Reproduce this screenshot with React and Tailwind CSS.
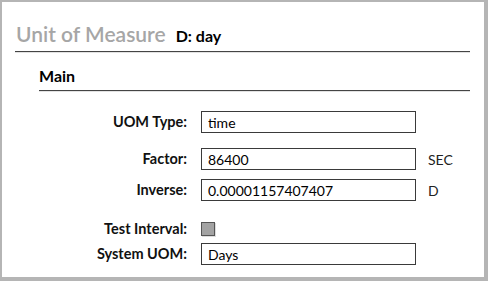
const font = { fontFamily: "Lato, 'Open Sans', sans-serif" };

function Field({ value }) {
  return (
    <div className="w-[215px] h-[22px] border border-[#3a3a3a] bg-white pl-[6px] flex items-center text-[14px] text-black">
      {value}
    </div>
  );
}

function Row({ label, children, unit, className = "" }) {
  return (
    <div className={"flex items-center " + className}>
      <div className="w-[162px] pr-[14px] text-right text-[14.5px] leading-[20px] font-bold text-[#111]">{label}</div>
      {children}
      {unit && <div className="ml-[12px] text-[14px] text-[#222]">{unit}</div>}
    </div>
  );
}

export default function App() {
  return (
    <div
      className="w-[488px] h-[281px] bg-white border-t-2 border-l-2 border-r-[4px] border-b-[4px] border-[#b5b5b5]"
      style={font}
    >
      <div className="pl-[14px] pt-[20px] flex items-baseline">
        <span className="text-[21px] leading-[24px] text-[#a6a6a6] font-semibold">Unit of Measure</span>
        <span className="ml-[10px] text-[16px] font-bold text-black">D: day</span>
      </div>
      <div className="ml-[13px] mr-[14px] mt-[3px] border-t border-[#444] border-b border-b-[#e2e2e2]" />

      <div className="ml-[37px] mr-[14px]">
        <div className="mt-[13px] text-[16px] leading-[20px] font-bold text-black">Main</div>
        <div className="mt-[4px] border-t border-[#444] border-b border-b-[#e2e2e2]" />

        <div className="flex flex-col">
          <Row label="UOM Type:" className="mt-[19px]">
            <Field value="time" />
          </Row>
          <Row label="Factor:" unit="SEC" className="mt-[15px]">
            <Field value="86400" />
          </Row>
          <Row label="Inverse:" unit="D" className="mt-[9px]">
            <Field value="0.00001157407407" />
          </Row>
          <Row label="Test Interval:" className="mt-[18px]">
            <div className="w-[14px] h-[14px] border border-[#555] bg-[#a3a3a3] shadow-[1px_1px_0_#ddd]" />
          </Row>
          <Row label="System UOM:" className="mt-[4px]">
            <Field value="Days" />
          </Row>
        </div>
      </div>
    </div>
  );
}
